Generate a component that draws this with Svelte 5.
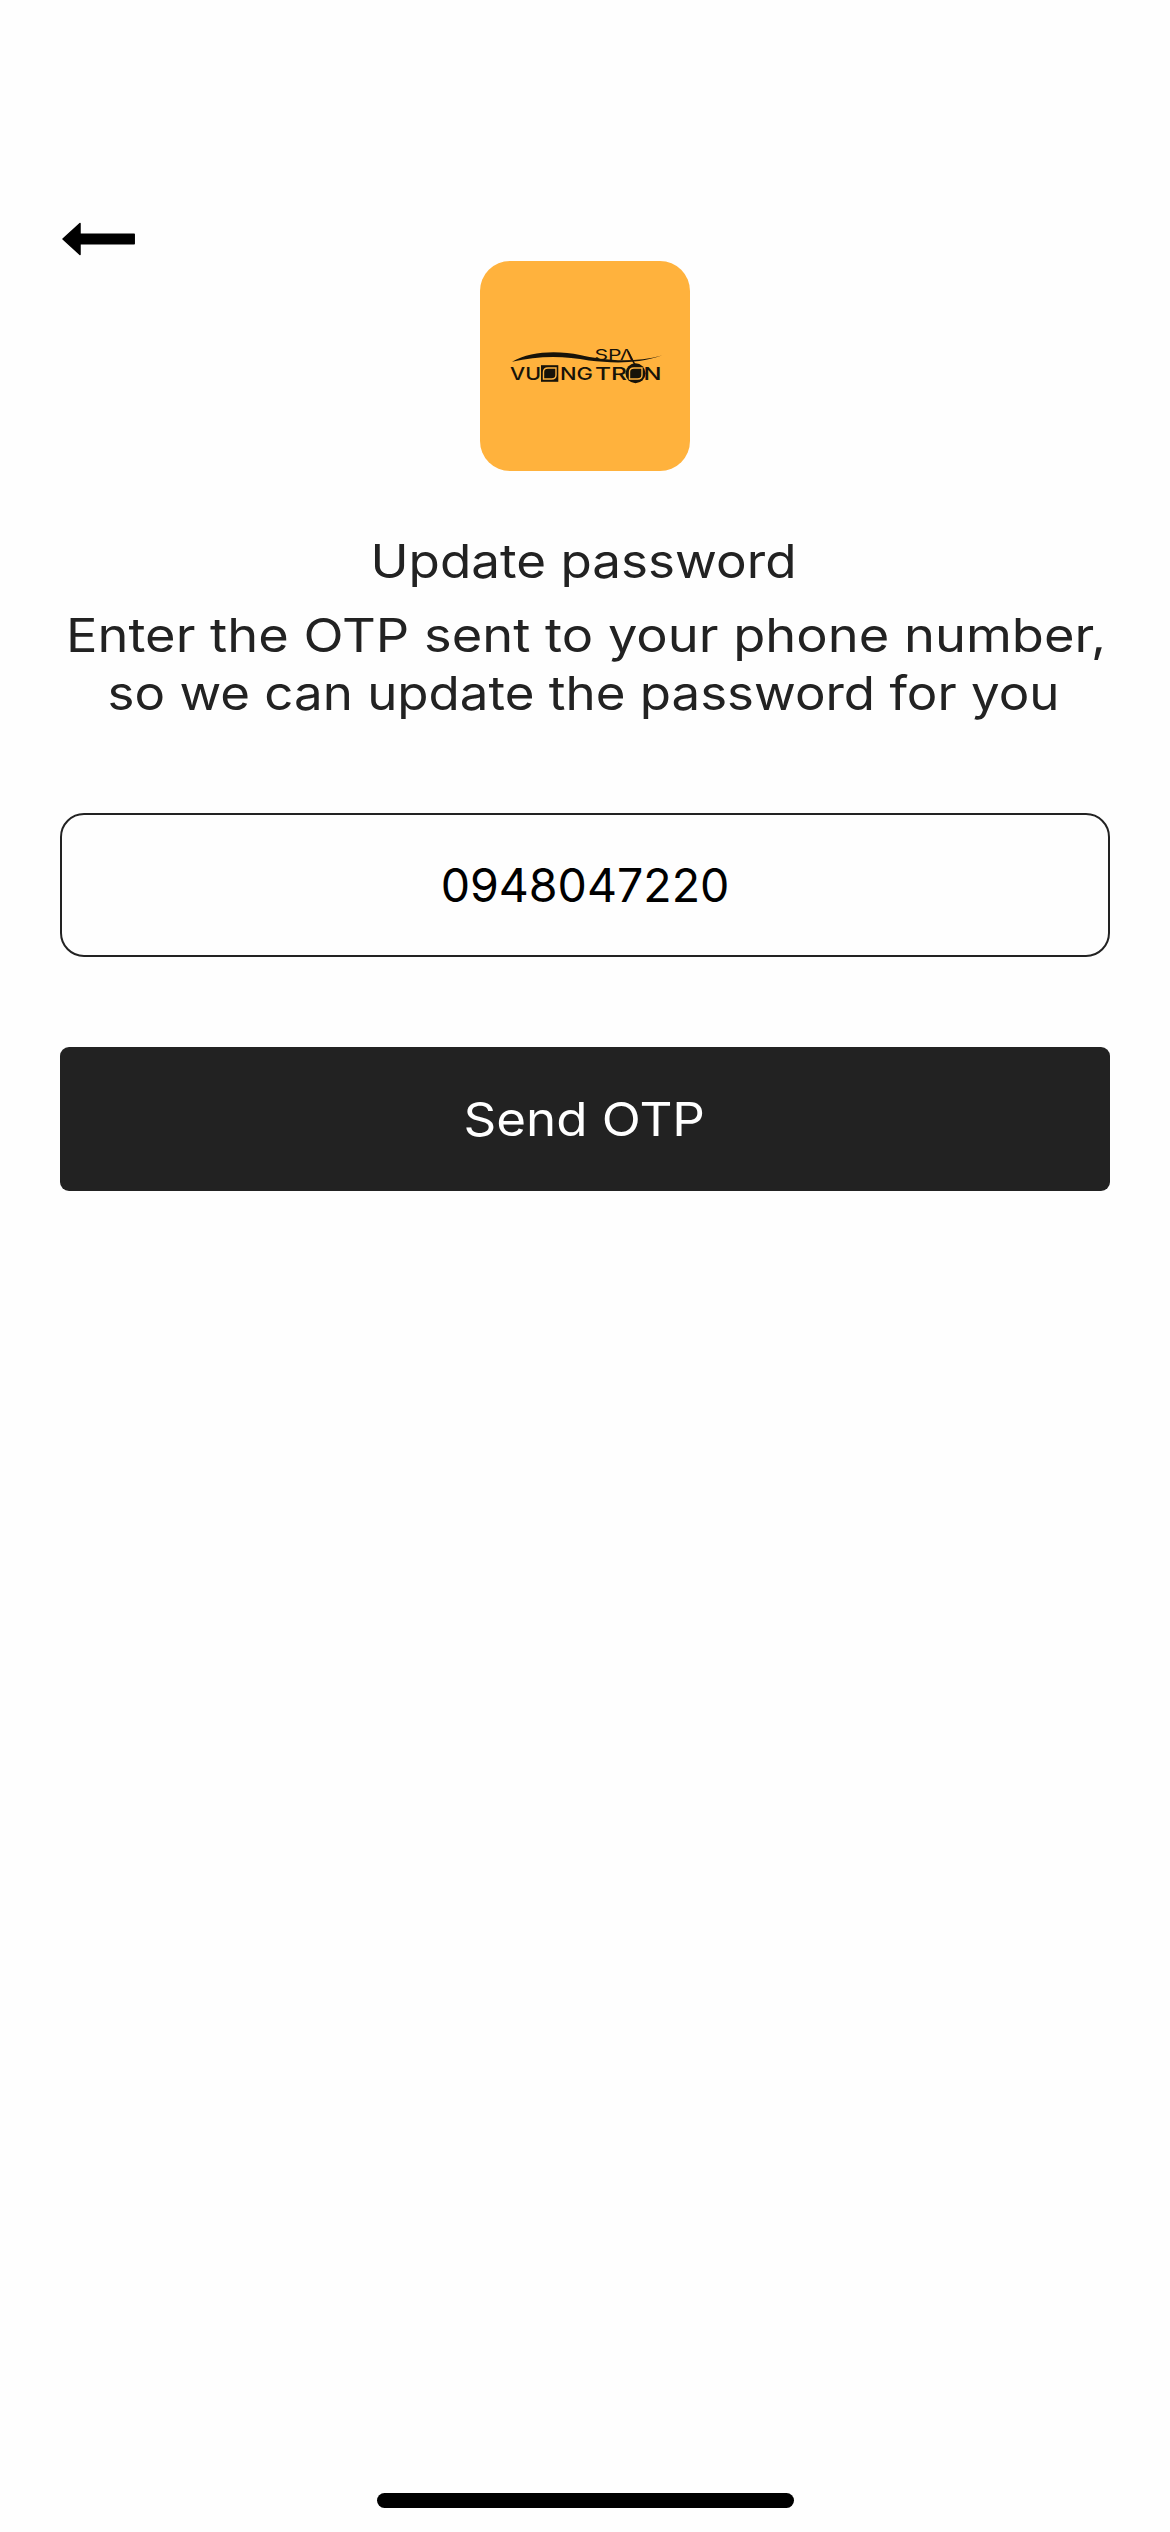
<script>
  let phone = $state('0948047220');
</script>

<main class="screen">
  <header>
    <button class="back" aria-label="Back">
      <svg width="76" height="36" viewBox="0 0 76 36">
        <path d="M3 18 20 2.5V13.2H74.2V22.8H20V33.5Z" fill="#000" stroke="#000" stroke-width="1.5" stroke-linejoin="round" />
      </svg>
    </button>
  </header>

  <svg class="logo" viewBox="0 0 210 210" role="img" aria-label="Spa Vuong Tron">
    <path d="M32 100.800C50 90 78 89.500 100 94C120 98.500 151 103 182 94.500C155 103.500 132 102 109 99.500C84 94.500 58 94.500 32 100.800Z" />
    <g class="small">
      <text x="114.500" y="98.600" textLength="27" lengthAdjust="spacingAndGlyphs">SP</text>
      <text x="140" y="98.600" textLength="13" lengthAdjust="spacingAndGlyphs">Λ</text>
    </g>
    <path d="M148 90 155 104" class="leg" />
    <g class="word">
      <text x="30" y="118.500" textLength="31" lengthAdjust="spacingAndGlyphs">VU</text>
      <text x="80" y="118.500" textLength="33" lengthAdjust="spacingAndGlyphs">NG</text>
      <text x="115" y="118.500" textLength="32" lengthAdjust="spacingAndGlyphs">TR</text>
      <text x="163.500" y="118.500" textLength="18" lengthAdjust="spacingAndGlyphs">N</text>
    </g>
    <rect x="61" y="104.200" width="17.300" height="16.600" />
    <path class="ring" d="M63.500 118V111Q63.500 107 68 107H76V114Q76 118 71.500 118Z" />
    <circle cx="155.500" cy="112.300" r="10" />
    <path class="ring" d="M149.500 118V111Q149.500 107 154 107H162V114Q162 118 157.500 118Z" />
  </svg>

  <h1>
    <svg class="line" viewBox="0 0 1050 58">
      <text x="310.500" y="46" textLength="426" lengthAdjust="spacingAndGlyphs">Update password</text>
    </svg>
  </h1>
  <p>
    <svg class="line" viewBox="0 0 1050 58">
      <text x="6" y="46" textLength="1040" lengthAdjust="spacingAndGlyphs">Enter the OTP sent to your phone number,</text>
    </svg>
    <svg class="line" viewBox="0 0 1050 58">
      <text x="47.500" y="46" textLength="952" lengthAdjust="spacingAndGlyphs">so we can update the password for you</text>
    </svg>
  </p>

  <input type="tel" bind:value={phone} aria-label="Phone number" />
  <button class="send">
    <svg class="line" viewBox="0 0 1050 58">
      <text x="403.500" y="46" textLength="241.500" lengthAdjust="spacingAndGlyphs">Send OTP</text>
    </svg>
  </button>

  <div class="home"></div>
</main>

<style>
  :global(body) {
    margin: 0;
    background: #fefefe;
  }
  .screen {
    box-sizing: border-box;
    width: 1170px;
    height: 2532px;
    padding: 221px 60px 24px;
    display: flex;
    flex-direction: column;
    background: #fefefe;
    color: #222;
    font-family: Inter, 'Liberation Sans', sans-serif;
    overflow: hidden;
  }
  header {
    height: 40px;
  }
  .back {
    display: block;
    padding: 0;
    border: 0;
    background: none;
  }
  .back svg {
    display: block;
  }
  .logo {
    align-self: center;
    flex: none;
    width: 210px;
    height: 210px;
    border-radius: 30px;
    background: #ffb23d;
    fill: #171309;
  }
  .word {
    font-size: 17.2px;
    font-weight: 500;
  }
  .small {
    font-size: 14.6px;
    font-weight: 400;
  }
  .leg {
    stroke: #171309;
    stroke-width: 1.6;
  }
  .ring {
    fill: #171309;
    stroke: #ffb23d;
    stroke-width: 1.4;
  }
  h1,
  p {
    margin: 0;
    font-size: 46.5px;
    font-weight: 400;
  }
  h1 {
    margin-top: 61px;
  }
  p {
    margin-top: 16px;
  }
  .line {
    display: block;
    width: 1050px;
    height: 58px;
    fill: currentColor;
  }
  input {
    box-sizing: border-box;
    width: 100%;
    height: 144px;
    margin: 91px 0 0;
    padding: 0;
    border: 2px solid #222;
    border-radius: 24px;
    background: transparent;
    color: #000;
    font: 400 46.5px Inter, sans-serif;
    text-align: center;
    outline: none;
  }
  .send {
    height: 144px;
    margin: 90px 0 0;
    padding: 0;
    border: 0;
    border-radius: 9px;
    background: #222;
    color: #fff;
    font: 400 46.5px Inter, sans-serif;
  }
  .home {
    align-self: center;
    width: 417px;
    height: 15px;
    margin-top: auto;
    border-radius: 8px;
    background: #000;
  }
</style>
